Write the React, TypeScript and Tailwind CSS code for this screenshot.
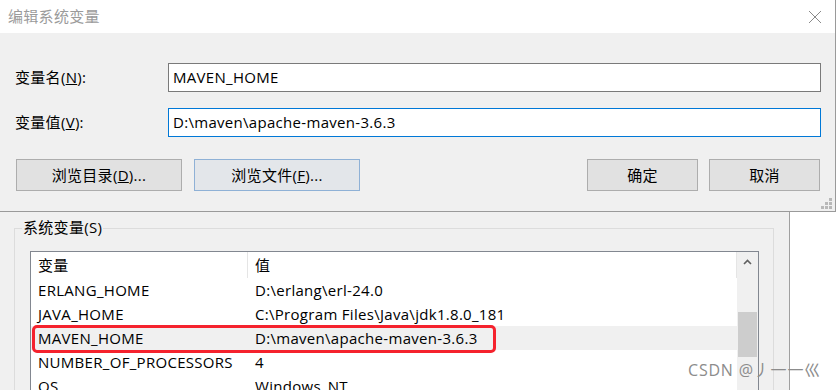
import React from 'react'

const ROWS = [
    { name: 'ERLANG_HOME', value: 'D:\\erlang\\erl-24.0' },
    { name: 'JAVA_HOME', value: 'C:\\Program Files\\Java\\jdk1.8.0_181' },
    { name: 'MAVEN_HOME', value: 'D:\\maven\\apache-maven-3.6.3', marked: true },
    { name: 'NUMBER_OF_PROCESSORS', value: '4' },
    { name: 'OS', value: 'Windows_NT' },
]

function Btn({ children, w, focus }: { children: React.ReactNode; w: string; focus?: boolean }) {
    return (
        <div className={`${w} h-[32px] flex items-center justify-center border text-[15px] text-black ${focus ? 'border-[#8fb1d6] bg-[#e3e6ea]' : 'border-[#adadad] bg-[#e1e1e1]'}`}>
            {children}
        </div>
    )
}

export default function App() {
    return (
        <div className="w-[840px] h-[390px] overflow-hidden bg-white relative font-['Open_Sans','Noto_Sans_CJK_SC',sans-serif] text-[15px] leading-none tracking-[0.3px]">
            {/* 编辑系统变量 dialog */}
            <div className="w-[836px] h-[212px] border-r border-b border-[#9a9a9a] relative flex flex-col">
                <div className="h-[33px] bg-white flex items-center justify-between pl-[8px] pr-[13px]">
                    <span className="text-[#9b9b9b]">编辑系统变量</span>
                    <svg width="14" height="14" viewBox="0 0 14 14">
                        <path d="M1 1 L13 13 M13 1 L1 13" stroke="#8a8a8a" strokeWidth="1" fill="none" />
                    </svg>
                </div>
                <div className="flex-1 bg-[#f0f0f0] pt-[30px] pl-[15px] pr-[14px]">
                    <div className="flex items-center">
                        <label className="w-[153px] text-black">变量名(<u>N</u>):</label>
                        <div className="flex-1 h-[29px] bg-white border border-[#7a7a7a] flex items-center pl-[4px]">MAVEN_HOME</div>
                    </div>
                    <div className="flex items-center mt-[16px]">
                        <label className="w-[153px] text-black">变量值(<u>V</u>):</label>
                        <div className="flex-1 h-[29px] bg-white border border-[#0078d7] flex items-center pl-[4px]">D:\maven\apache-maven-3.6.3</div>
                    </div>
                    <div className="flex items-center mt-[22px] pl-[1px] pr-[1px]">
                        <Btn w="w-[166px]">浏览目录(<u>D</u>)...</Btn>
                        <div className="ml-[12px]"><Btn w="w-[166px]" focus>浏览文件(<u>F</u>)...</Btn></div>
                        <div className="ml-auto"><Btn w="w-[111px]">确定</Btn></div>
                        <div className="ml-[11px]"><Btn w="w-[111px]">取消</Btn></div>
                    </div>
                </div>
                {/* resize grip */}
                <svg className="absolute right-[2px] bottom-[1px]" width="12" height="12" viewBox="0 0 12 12">
                    {[[8, 0], [4, 4], [8, 4], [0, 8], [4, 8], [8, 8]].map(([x, y]) => (
                        <rect key={`${x}-${y}`} x={x} y={y} width="3" height="3" fill="#b8b8b8" />
                    ))}
                </svg>
            </div>

            {/* 环境变量 window behind */}
            <div className="flex h-[178px]">
                <div className="w-[790px] bg-[#f0f0f0] border-r border-[#a0a0a0] pl-[14px] pt-[16px]">
                    <div className="w-[760px] h-[200px] border border-[#dcdcdc] relative pl-[15px] pt-[22px]">
                        <span className="absolute left-[7px] top-[-9px] bg-[#f0f0f0] px-[1px] text-black">系统变量(S)</span>
                        <div className="w-[729px] h-[200px] bg-white border border-[#828790] flex">
                            <div className="flex-1 flex flex-col">
                                <div className="h-[26px] flex items-center text-black">
                                    <div className="w-[217px] h-full flex items-center pl-[7px] border-r border-[#e5e5e5]">变量</div>
                                    <div className="flex-1 h-full flex items-center pl-[7px] border-r border-[#e5e5e5]">值</div>
                                </div>
                                {ROWS.map(r => (
                                    <div key={r.name} className={`h-[24px] flex items-center relative text-black ${r.marked ? 'bg-[#f0f0f0]' : ''}`}>
                                        <div className="w-[217px] pl-[7px]">{r.name}</div>
                                        <div className="pl-[7px]">{r.value}</div>
                                        {r.marked && (
                                            <div className="absolute left-[1px] top-[-1px] w-[464px] h-[28px] border-[3px] border-[#f5222d] rounded-[5px]" />
                                        )}
                                    </div>
                                ))}
                            </div>
                            {/* scrollbar */}
                            <div className="w-[21px] bg-[#f0f0f0] flex flex-col items-center">
                                <svg className="mt-[7px]" width="9" height="6" viewBox="0 0 9 6">
                                    <path d="M1 5 L4.5 1.5 L8 5" stroke="#606060" strokeWidth="1.6" fill="none" />
                                </svg>
                                <div className="mt-[47px] w-[19px] h-[45px] bg-[#cdcdcd]" />
                            </div>
                        </div>
                    </div>
                </div>
                <div className="flex-1 bg-white" />
            </div>

            <span className="absolute left-[688px] top-[362px] text-[#8c8c8c] text-[16px] tracking-[0.8px]">CSDN @丿一一巛</span>
        </div>
    )
}
